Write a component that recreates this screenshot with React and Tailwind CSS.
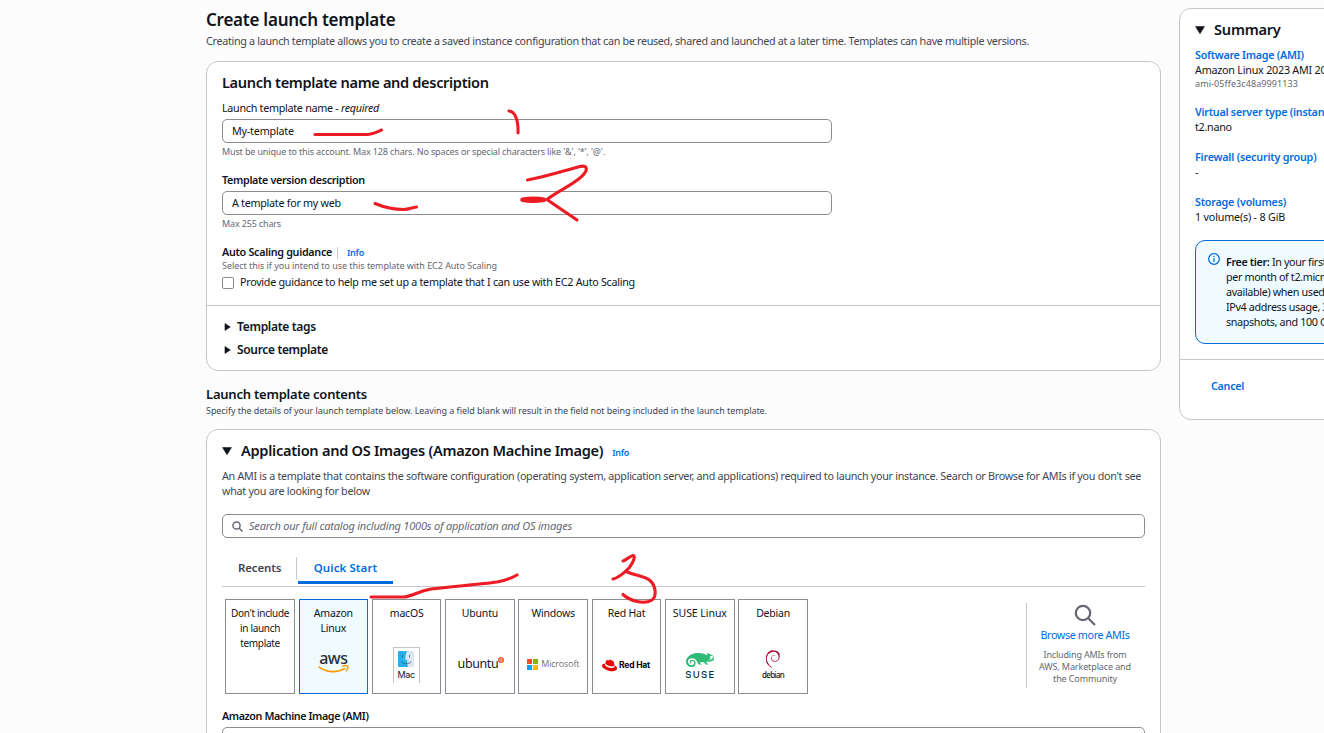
import { FaRedhat } from "react-icons/fa";
import { SiSuse, SiDebian } from "react-icons/si";

function Body({ className = "tracking-[-0.28px]", children }) {
  return <span className={"shrink-0 whitespace-nowrap " + className}>{children}</span>;
}

function Raised({ className = "", children }) {
  return <span className={"mb-[2px] shrink-0 whitespace-nowrap " + className}>{children}</span>;
}

function Row({ className = "h-[15px]", children }) {
  return <div className={"flex items-center " + className}>{children}</div>;
}

function Info() {
  return <Body className="text-[9px] font-semibold tracking-[-0.27px] text-[#006ce0]">Info</Body>;
}

function Caret({ down, className = "size-2" }) {
  return (
    <svg viewBox="0 0 10 10" className={"shrink-0 fill-[#0f141a] " + className}>
      <path d={down ? "M0.6 1.6H9.4L5 8.8Z" : "M1.2 0.6L8 5L1.2 9.4Z"} stroke="#0f141a" strokeWidth="0.6" strokeLinejoin="round" />
    </svg>
  );
}

function Magnifier({ className, strokeWidth = 2.2 }) {
  return (
    <svg viewBox="0 0 22 22" fill="none" strokeWidth={strokeWidth} className={"shrink-0 stroke-[#656871] " + className}>
      <circle cx="9" cy="9" r="7.2" />
      <path d="M14 14L21 21" />
    </svg>
  );
}

function Field({ children }) {
  return <Row className="mt-[3px] h-[24px] w-[610px] rounded-[5px] border border-[#8c8c94] px-[9px]">{children}</Row>;
}

function Tile({ children, logo, selected, className = "text-[10.5px] tracking-[-0.2px]" }) {
  return (
    <div className={"flex h-[95px] w-[69.5px] shrink-0 flex-col border " + (selected ? "border-[#006ce0] bg-[#f0fbff]" : "border-[#8c8c94] bg-white")}>
      <div className={"mt-[6px] flex flex-col items-center leading-[15px] " + className}>{children}</div>
      <div className="mt-auto flex h-[58px] items-center justify-center">{logo}</div>
    </div>
  );
}

function AwsLogo() {
  return (
    <div className="-mt-[4px] flex flex-col items-center">
      <Body className="text-[16px] font-medium leading-[14px] tracking-[-0.5px] text-[#252f3e]">aws</Body>
      <svg viewBox="0 0 31 9" className="h-[9px] w-[31px]" fill="none" stroke="#ff9900" strokeWidth="1.7">
        <path d="M0.5 1.6C8 7.6 19 8.3 27 3.4" />
        <path d="M24.2 1.2C27 0.5 29.3 0.5 29.8 1.1C30.2 2 29.4 4.4 28 6.3" strokeWidth="1.4" />
      </svg>
    </div>
  );
}

function MacLogo() {
  return (
    <div className="mr-px mt-[2px] flex h-[36px] w-[27px] flex-col items-center border border-b-0 border-[#c4c4c8] bg-white pt-[3px]">
      <svg viewBox="0 0 16 16" className="size-[16px] shrink-0">
        <rect width="16" height="16" rx="1" fill="#dce6f0" />
        <path d="M1 0H9C7.6 3 7.2 6 7.3 9H9.2C9.2 11.5 9.5 14 10 16H1C.4 16 0 15.6 0 15V1C0 .4.4 0 1 0Z" fill="#27b0ea" />
        <path d="M4.5 4V6.5M11.5 4V6.5M3 10.5C6 13.5 10.5 13.5 13.3 10.5" fill="none" stroke="#2d5f86" strokeWidth="0.8" />
      </svg>
      <Body className="mt-[2px] font-['Inter'] text-[9px] leading-[12px] tracking-[-0.3px]">Mac</Body>
    </div>
  );
}

function UbuntuLogo() {
  return (
    <div className="flex pl-[2px]">
      <Body className="mt-[-1px] text-[12.5px] leading-[16px] tracking-[-0.4px] text-[#1a1a1a]">ubuntu</Body>
      <svg viewBox="0 0 12 12" className="size-[6px] shrink-0">
        <circle cx="6" cy="6" r="6" fill="#ea5a2c" />
        <circle cx="6" cy="6" r="2.8" fill="none" stroke="#fff" strokeWidth="1" />
      </svg>
    </div>
  );
}

function MicrosoftLogo() {
  return (
    <div className="flex items-center gap-[3px]">
      <div className="grid shrink-0 grid-cols-2 gap-px">
        <i className="size-[5px] bg-[#f25022]" /><i className="size-[5px] bg-[#7fba00]" />
        <i className="size-[5px] bg-[#00a4ef]" /><i className="size-[5px] bg-[#ffb900]" />
      </div>
      <Body className="font-['Open_Sans'] text-[9px] leading-[12px] tracking-[-0.19px] text-[#737373]">Microsoft</Body>
    </div>
  );
}

function RedHatLogo() {
  return (
    <div className="flex items-center gap-[2px] pr-px pt-[2px]">
      <FaRedhat className="size-[15px] shrink-0 text-[#ee0000]" />
      <Body className="font-['Inter'] text-[8.5px] font-bold leading-[12px] tracking-[-0.19px] text-black">Red Hat</Body>
    </div>
  );
}

function SuseLogo() {
  return (
    <div className="flex h-[34px] flex-col items-center pt-[5px]">
      <SiSuse className="-my-[6px] size-[28px] shrink-0 text-[#30ba78]" />
      <Body className="mt-px pl-[1px] font-['Inter'] text-[9.5px] font-medium leading-[12px] tracking-[1.3px] text-[#0c322c]">SUSE</Body>
    </div>
  );
}

function DebianLogo() {
  return (
    <div className="flex flex-col items-center pt-[2px]">
      <SiDebian className="size-[18px] shrink-0 text-[#a80030]" />
      <Body className="mt-px text-[8px] font-medium leading-[11px] tracking-[-0.7px]">debian</Body>
    </div>
  );
}

function Annotations() {
  return (
    <svg viewBox="0 0 1324 733" className="pointer-events-none absolute inset-0 h-[733px] w-[1324px]" fill="none" stroke="#ed1c24" strokeWidth="3.1" strokeLinecap="round" strokeLinejoin="round">
      <path d="M315 134.5H367C372 134.5 377 132 381.5 130" />
      <path d="M509 111C515 111.5 518.5 120 518 133" />
      <path d="M527.5 180C545 177 563 171 580 166.5C587 165 588 169 584 174C577 183 561 189 547 199.5C556 206 567 213 577 220" />
      <path d="M522.5 199.7C530 198.5 538 198.5 544 199.7C537 201 529 201 522.5 199.7Z" strokeWidth="4.5" />
      <path d="M375 203.5C388 209 396 209.5 404 209.5C409 209 412 207.5 416.5 207" />
      <path d="M371 597H403C412 597 417 591.5 431 589C450 586.5 480 584.5 497 582C507 580 511 578.5 517 575" />
      <path d="M623 561C626 560 630 556 633.5 555.5C636 557 632 564 629 568C624 573 619 578 613 579" />
      <path d="M626 571.5C636 576 645 576 650 580.5C656 586 657 596 652 600C644 605 630 601 623 594.5" />
    </svg>
  );
}

export default function App() {
  return (
    <div className="relative h-[733px] w-[1324px] overflow-hidden bg-[#fcfcfd] font-['Noto_Sans',sans-serif] text-[10.75px] leading-[15px] text-[#0f141a]">
      <div className="flex items-start gap-[18px] pl-[206px]">
        <main className="flex w-[955px] shrink-0 flex-col">
          <h1 className="mt-[10px] flex h-[20px] items-center"><Raised className="text-[17px] font-semibold tracking-[-0.24px]">Create launch template</Raised></h1>
          <Row className="mt-[4px] h-[15px] text-[#424650]"><Body className="tracking-[-0.306px]">Creating a launch template allows you to create a saved instance configuration that can be reused, shared and launched at a later time. Templates can have multiple versions.</Body></Row>

          <section className="mt-[12px] flex h-[310px] flex-col rounded-[12px] border border-[#c6c6cd] bg-white">
            <div className="flex h-[244px] flex-col border-b border-[#c6c6cd] px-[15px]">
              <h2 className="mt-[11px] flex h-[20px] items-center"><Raised className="text-[14.6px] font-semibold tracking-[-0.35px]">Launch template name and description</Raised></h2>
              <Row className="mt-[8px] h-[15px]"><Body className="tracking-[-0.285px]">Launch template name - <i>required</i></Body></Row>
              <Field><Body className="tracking-[-0.2px]">My-template</Body></Field>
              <Row className="mt-[3px] h-[12px] text-[#656871]"><Raised className="text-[9px] tracking-[-0.142px]">Must be unique to this account. Max 128 chars. No spaces or special characters like '&amp;', '*', '@'.</Raised></Row>
              <Row className="mt-[15px] h-[15px]"><Body className="font-semibold tracking-[-0.33px]">Template version description</Body></Row>
              <Field><Body>A template for my web</Body></Field>
              <Row className="mt-[3px] h-[12px] text-[#656871]"><Raised className="text-[9px] tracking-[-0.16px]">Max 255 chars</Raised></Row>
              <Row className="mt-[15px] h-[15px]">
                <Body className="font-semibold tracking-[-0.29px]">Auto Scaling guidance</Body>
                <i className="ml-[5px] mr-[9px] h-[12px] w-px bg-[#c6c6cd]" />
                <Info />
              </Row>
              <Row className="h-[12px] text-[#656871]"><Raised className="text-[9px] tracking-[-0.044px]">Select this if you intend to use this template with EC2 Auto Scaling</Raised></Row>
              <Row className="mt-[3px] h-[15px] gap-[6px]">
                <i className="size-[12px] rounded-[2px] border border-[#8c8c94]" />
                <Body className="tracking-[-0.278px]">Provide guidance to help me set up a template that I can use with EC2 Auto Scaling</Body>
              </Row>
            </div>
            <div className="px-[17px] pt-[13px]">
              <Row className="h-[15px] gap-[5px]"><Caret /><Body className="text-[12px] font-semibold tracking-[-0.3px]">Template tags</Body></Row>
              <Row className="mt-[8px] h-[15px] gap-[5px]"><Caret /><Body className="text-[12px] font-semibold tracking-[-0.34px]">Source template</Body></Row>
            </div>
          </section>

          <h2 className="mt-[15px] flex h-[18px] items-center"><Raised className="text-[13px] font-semibold tracking-[-0.22px]">Launch template contents</Raised></h2>
          <Row className="mt-px h-[12px] text-[#424650]"><Raised className="text-[9px] tracking-[-0.063px]">Specify the details of your launch template below. Leaving a field blank will result in the field not being included in the launch template.</Raised></Row>

          <section className="mt-[12px] flex h-[330px] shrink-0 flex-col rounded-t-[12px] border border-[#c6c6cd] bg-white px-[15px]">
            <Row className="mt-[11px] h-[20px]">
              <Caret down className="mr-[9px] size-[10px]" />
              <Raised className="mr-[9px] text-[14.6px] font-semibold tracking-[-0.29px]">Application and OS Images (Amazon Machine Image)</Raised>
              <span className="pt-[2px]"><Info /></span>
            </Row>
            <Row className="mt-[8px] h-[15px] text-[#424650]"><Body className="tracking-[-0.29px]">An AMI is a template that contains the software configuration (operating system, application server, and applications) required to launch your instance. Search or Browse for AMIs if you don't see</Body></Row>
            <Row className="h-[15px] text-[#424650]"><Body>what you are looking for below</Body></Row>
            <Row className="mt-[15px] h-[24px] gap-[6px] rounded-[5px] border border-[#8c8c94] pl-[9px] text-[#656871]">
              <Magnifier className="size-[11px]" strokeWidth={3} />
              <Raised className="text-[11px] italic tracking-[-0.209px]">Search our full catalog including 1000s of application and OS images</Raised>
            </Row>
            <div className="mt-[17px] flex h-[32px] border-b border-[#c6c6cd] text-[11.5px] font-semibold">
              <Row className="mt-[2px] h-[22px] w-[75px] border-r border-[#c6c6cd] pl-[16px] text-[#424650]"><Raised className="tracking-[-0.14px]">Recents</Raised></Row>
              <Row className="ml-px h-[29px] w-[95px] justify-center border-b-[3px] border-[#006ce0] text-[#006ce0]"><Raised className="tracking-[0.09px]">Quick Start</Raised></Row>
            </div>
            <div className="mt-[12px] flex justify-between">
              <div className="ml-[3.3px] flex gap-[3.8px]">
                <Tile className="text-[10px] tracking-[-0.3px]"><span>Don't include</span><span>in launch</span><span>template</span></Tile>
                <Tile selected logo={<AwsLogo />}><span>Amazon</span><span>Linux</span></Tile>
                <Tile logo={<MacLogo />}>macOS</Tile>
                <Tile logo={<UbuntuLogo />}>Ubuntu</Tile>
                <Tile logo={<MicrosoftLogo />}>Windows</Tile>
                <Tile logo={<RedHatLogo />}>Red Hat</Tile>
                <Tile logo={<SuseLogo />} className="text-[10.5px] tracking-[-0.05px]">SUSE Linux</Tile>
                <Tile logo={<DebianLogo />}>Debian</Tile>
              </div>
              <div className="mt-[4px] flex h-[85px] w-[119px] flex-col items-center border-l border-[#c6c6cd] pr-[2px] pt-px text-[#656871]">
                <Magnifier className="size-[22px]" />
                <Row className="mt-[2px] h-[15px] text-[#006ce0]"><Body className="tracking-[-0.37px]">Browse more AMIs</Body></Row>
                <Row className="mt-[5px] h-[12px]"><Body className="text-[9px] tracking-[-0.17px]">Including AMIs from</Body></Row>
                <Row className="h-[12px]"><Body className="text-[9px] tracking-[-0.116px]">AWS, Marketplace and</Body></Row>
                <Row className="h-[12px]"><Body className="text-[9px] tracking-[-0.114px]">the Community</Body></Row>
              </div>
            </div>
            <Row className="mt-[15px] h-[15px]"><Body className="font-semibold tracking-[-0.42px]">Amazon Machine Image (AMI)</Body></Row>
            <div className="mt-[3px] h-[24px] rounded-[5px] border border-[#8c8c94]" />
          </section>
        </main>

        <aside className="mt-[8px] flex h-[412px] w-[300px] shrink-0 flex-col rounded-[12px] border border-[#c6c6cd] bg-white">
          <div className="flex h-[351px] flex-col border-b border-[#c6c6cd] px-[15px]">
            <Row className="mt-[11px] h-[20px] gap-[9px]"><Caret down className="size-[10px]" /><Raised className="text-[14.6px] font-semibold tracking-[-0.23px]">Summary</Raised></Row>
            <Row className="mt-[8px] h-[15px] text-[#006ce0]"><Body className="font-semibold tracking-[-0.28px]">Software Image (AMI)</Body></Row>
            <Row><Body className="tracking-[-0.23px]">Amazon Linux 2023 AMI 2023.6</Body></Row>
            <Row className="h-[12px] text-[#656871]"><Raised className="text-[9px] tracking-[0.09px]">ami-05ffe3c48a9991133</Raised></Row>
            <Row className="mt-[15px] h-[15px] font-semibold text-[#006ce0]"><Body className="tracking-[-0.25px]">Virtual server type (instance type)</Body></Row>
            <Row><Body>t2.nano</Body></Row>
            <Row className="mt-[15px] h-[15px] text-[#006ce0]"><Body className="font-semibold tracking-[-0.2px]">Firewall (security group)</Body></Row>
            <Row><Body>-</Body></Row>
            <Row className="mt-[15px] h-[15px] text-[#006ce0]"><Body className="font-semibold tracking-[-0.22px]">Storage (volumes)</Body></Row>
            <Row><Body className="tracking-[-0.19px]">1 volume(s) - 8 GiB</Body></Row>
            <div className="mt-[15px] flex h-[104px] gap-[6px] rounded-[10px] border border-[#006ce0] bg-[#f0fbff] pl-[12px] pt-[14px]">
              <svg viewBox="0 0 12 12" className="-mt-[2px] size-[12px] shrink-0" fill="none" stroke="#006ce0" strokeWidth="1.3">
                <circle cx="6" cy="6" r="5.3" /><path d="M6 5.3V9M6 2.9V4.2" />
              </svg>
              <div className="whitespace-nowrap tracking-[-0.35px]">
                <Row><Body className=""><b className="font-semibold">Free tier:</b> In your first year</Body></Row>
                <Row><Body className="">per month of t2.micro</Body></Row>
                <Row><Body className="">available) when used</Body></Row>
                <Row><Body className="">IPv4 address usage, 30</Body></Row>
                <Row><Body className="">snapshots, and 100 GB</Body></Row>
              </div>
            </div>
          </div>
          <Row className="ml-[31px] mt-[19px] h-[15px] text-[#006ce0]"><Body className="font-semibold tracking-[-0.28px]">Cancel</Body></Row>
        </aside>
      </div>
      <Annotations />
    </div>
  );
}
